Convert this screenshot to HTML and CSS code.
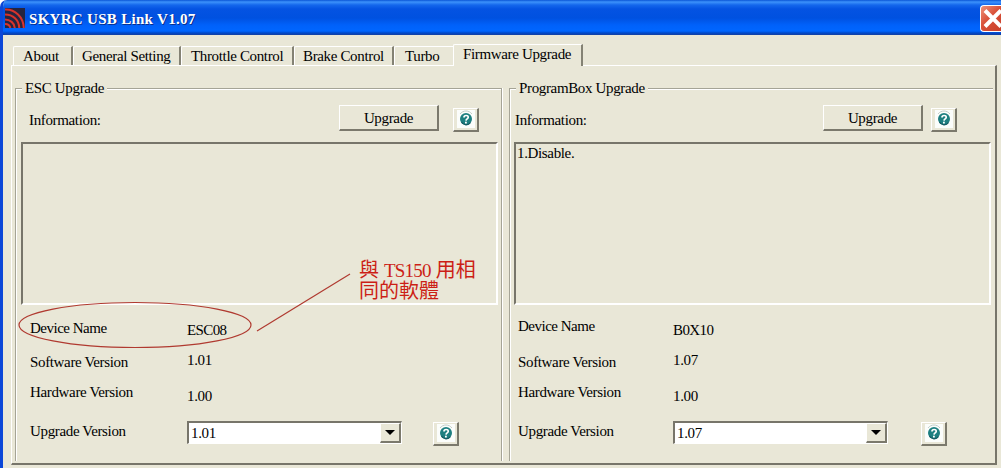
FILE: index.html
```
<!DOCTYPE html>
<html>
	<head>
		<title>SKYRC USB Link V1.07</title>
		<meta charset="UTF-8">
		<link rel="stylesheet" href="styles.css">
	</head>
	<body>

		<!-- shared icons -->
		<svg class="defs" width="0" height="0">
			<symbol id="help" viewBox="0 0 18 18">
				<rect width="18" height="18" fill="#fbfdfb"/>
				<path d="M3 4 C6 0 12 0 15 4" fill="none" stroke="#c3cec8" stroke-width="1"/>
				<circle cx="9" cy="9" r="6" fill="#1d7f80"/>
				<path d="M4.500 12 A5.300 5.300 0 0 0 13.500 12.500" fill="none" stroke="#155b63" stroke-width="1.300"/>
				<path d="M7 7.500 C7 4.800 11.400 4.800 11.200 7.500 C11.100 8.900 9.200 8.900 9 10.600" fill="none" stroke="#fff" stroke-width="1.700"/>
				<rect x="8" y="11.700" width="1.800" height="1.800" fill="#fff"/>
			</symbol>
		</svg>

		<div class="window">
			<div class="titlebar">
				<svg class="logo" width="20" height="20" viewBox="0 0 20 20">
					<rect width="20" height="20" fill="#26253f"/>
					<g fill="none" stroke="#d8332c" stroke-width="2">
						<path d="M0 1.500 C10 1 18.500 9 18.800 20"/>
						<path d="M0 6.500 C8 6.500 14 12 14.300 20"/>
						<path d="M0 11.500 C5 11.500 9.500 15 9.800 20"/>
						<path d="M0 16 C3 16 5 18 5.300 20"/>
					</g>
				</svg>
				<span class="title">SKYRC USB Link V1.07</span>
				<div class="close">
					<svg width="21" height="25" viewBox="0 0 21 25"><path d="M4 4.500 L20 20.500 M20 4.500 L4 20.500" stroke="#fff" stroke-width="4"/></svg>
				</div>
			</div>

			<div class="tabs">
				<div class="tab t_about">About</div>
				<div class="tab t_general">General Setting</div>
				<div class="tab t_throttle">Throttle Control</div>
				<div class="tab t_brake">Brake Control</div>
				<div class="tab t_turbo">Turbo</div>
				<div class="tab t_firmware active">Firmware Upgrade</div>
			</div>

			<div class="page">
				<div class="group esc">
					<div class="legend">ESC Upgrade</div>
					<div class="toolbar">
						<label>Information:</label>
						<div class="button">Upgrade</div>
						<div class="helpbtn"><svg width="20" height="18"><use href="#help"/></svg></div>
					</div>
					<div class="info"></div>
					<div class="details">
						<div class="names">
							<div class="device">Device Name</div>
							<div class="software">Software Version</div>
							<div class="hardware">Hardware Version</div>
							<div class="upgrade">Upgrade Version</div>
						</div>
						<div class="values">
							<div class="device">ESC08</div>
							<div class="software">1.01</div>
							<div class="hardware">1.00</div>
							<div class="select"><span>1.01</span><div class="arrow"></div></div>
						</div>
						<div class="helpbtn"><svg width="20" height="18"><use href="#help"/></svg></div>
					</div>
				</div>

				<div class="group box">
					<div class="legend">ProgramBox Upgrade</div>
					<div class="toolbar">
						<label>Information:</label>
						<div class="button">Upgrade</div>
						<div class="helpbtn"><svg width="20" height="18"><use href="#help"/></svg></div>
					</div>
					<div class="info">1.Disable.</div>
					<div class="details">
						<div class="names">
							<div class="device">Device Name</div>
							<div class="software">Software Version</div>
							<div class="hardware">Hardware Version</div>
							<div class="upgrade">Upgrade Version</div>
						</div>
						<div class="values">
							<div class="device">B0X10</div>
							<div class="software">1.07</div>
							<div class="hardware">1.00</div>
							<div class="select"><span>1.07</span><div class="arrow"></div></div>
						</div>
						<div class="helpbtn"><svg width="20" height="18"><use href="#help"/></svg></div>
					</div>
				</div>
			</div>

			<!-- red pen marks over the window -->
			<svg class="marks" width="500" height="360">
				<ellipse cx="135" cy="325" rx="116" ry="22.500"/>
				<path d="M257 331 L350 274"/>
			</svg>
			<div class="note">與 <span>TS150</span> 用相<br>同的軟體</div>
		</div>

	</body>
</html>
```
FILE: styles.css
```
body {
	margin: 0px;
	background-color: #fff;
	overflow: hidden;
	font-family: "Liberation Serif", "Noto Sans CJK TC", serif;
	font-size: 15px;
	line-height: 18px;
	letter-spacing: -0.35px;
	color: #000;
	white-space: nowrap;
}
.defs {
	position: absolute;
}
.window {
	position: relative;
	box-sizing: border-box;
	width: 1001px;
	height: 468px;
	overflow: hidden;
	background-color: #e9e7d7;
	border-left: 3px solid #0b47d8;
	border-top-left-radius: 7px;
}

/* title bar */
.titlebar {
	display: flex;
	align-items: flex-start;
	box-sizing: border-box;
	height: 35px;
	margin-left: -3px;
	padding: 5px 0px 0px 5px;
	background: linear-gradient(#0a55d6 0px, #3c92fb 2px, #1467ec 5px, #0453e2 9px, #0051e0 18px, #0061fa 25px, #0066ff 31px, #0148c8 33px, #1540a0 35px);
}
.logo {
	margin-top: 3px;
}
.title {
	margin: 5px 0px 0px 4px;
	color: #fff;
	font-weight: bold;
	font-size: 15px;
	letter-spacing: 0.3px;
	text-shadow: 1px 1px #0a2f8c;
}
.close {
	box-sizing: border-box;
	width: 21px;
	height: 27px;
	margin-left: auto;
	border: 1px solid #fff;
	border-right: none;
	border-radius: 4px 0px 0px 4px;
	background: linear-gradient(135deg, #ee9279, #d9513a 45%, #c9402a);
	overflow: hidden;
}

/* tabs */
.tabs {
	display: flex;
	align-items: flex-end;
	height: 30px;
	padding-left: 10px;
}
.tab {
	box-sizing: border-box;
	height: 19px;
	padding-left: 9px;
	border-top: 1px solid #fff;
	border-left: 1px solid #fff;
	border-right: 2px solid #848274;
	border-top-left-radius: 2px;
}
.t_about { width: 60px; }
.t_general { width: 108px; padding-left: 8px; }
.t_throttle { width: 113px; }
.t_brake { width: 100px; padding-left: 8px; }
.t_turbo { width: 59px; padding-left: 10px; border-right: none; }
.t_firmware { width: 130px; }
.tab.active {
	height: 22px;
	margin-bottom: -1px;
	background-color: #e9e7d7;
	position: relative;
}

/* tab page */
.page {
	display: flex;
	align-items: flex-start;
	box-sizing: border-box;
	width: 986px;
	height: 400px;
	margin-left: 8px;
	padding: 22px 0px 0px 3px;
	border: 1px solid #fff;
	border-right: 2px solid #77756a;
	border-bottom: 2px solid #77756a;
}
.group {
	box-sizing: border-box;
	height: 373px;
	border-top: 1px solid #a5a496;
	border-left: 1px solid #a5a496;
	box-shadow: inset 1px 1px #fff;
}
.esc {
	width: 487px;
	padding-left: 5px;
	border-right: 1px solid #a5a496;
	box-shadow: inset 1px 1px #fff, 1px 0px #fff;
}
.box {
	width: 484px;
	margin-left: 7px;
	padding-left: 4px;
}
.legend {
	width: max-content;
	margin: -10px 0px 0px 1px;
	padding: 0px 3px;
	background-color: #e9e7d7;
}
.box .legend {
	margin-left: 2px;
}
.toolbar {
	display: flex;
	height: 27px;
	margin-top: 8px;
}
.toolbar label {
	width: 310px;
	padding: 6px 0px 0px 8px;
	box-sizing: border-box;
}
.box .toolbar label {
	padding-left: 1px;
}
.button {
	box-sizing: border-box;
	width: 100px;
	height: 26px;
	margin-left: 8px;
	padding-top: 3px;
	text-align: center;
}
.box .button {
	margin-left: -1px;
}
.button, .helpbtn, .arrow {
	border: 1px solid #fff;
	border-right: 2px solid #7b796c;
	border-bottom: 2px solid #7b796c;
}
.helpbtn {
	box-sizing: border-box;
	width: 26px;
	height: 24px;
	margin: 3px 0px 0px 14px;
}
.box .toolbar .helpbtn {
	margin-left: 8px;
}
.helpbtn svg {
	display: block;
	margin: 1px auto;
}
.info {
	box-sizing: border-box;
	width: 477px;
	height: 163px;
	margin-top: 10px;
	padding-left: 1px;
	border: 2px solid #77756a;
	border-right-color: #fff;
	border-bottom-color: #fff;
}

/* version rows */
.details {
	display: flex;
	align-items: flex-start;
	padding-left: 9px;
}
.box .details {
	padding-left: 4px;
}
.names {
	width: 157px;
	padding-top: 14px;
}
.box .names {
	width: 155px;
	padding-top: 12px;
}
.names .device {
	letter-spacing: -0.5px;
}
.names .software { margin-top: 16px; }
.box .names .software { margin-top: 18px; }
.names .hardware { margin-top: 12px; }
.names .upgrade { margin-top: 21px; }
.values {
	width: 215px;
	padding-top: 16px;
}
.values .device {
	letter-spacing: -0.6px;
}
.values .software { margin-top: 12px; }
.values .hardware { margin-top: 18px; }
.select {
	display: flex;
	justify-content: space-between;
	box-sizing: border-box;
	height: 23px;
	margin-top: 16px;
	padding-left: 2px;
	background-color: #fff;
	border: 2px solid #77756a;
	border-right: 1px solid #fff;
	border-bottom: 1px solid #fff;
}
.select span {
	padding-top: 1px;
}
.arrow {
	display: flex;
	align-items: center;
	justify-content: center;
	width: 18px;
	background-color: #e9e7d7;
}
.arrow:before {
	content: "";
	border: 5px solid transparent;
	border-top-color: #000;
	border-bottom: none;
}
.details .helpbtn {
	margin: 117px 0px 0px 31px;
}
.box .details .helpbtn {
	margin-left: 33px;
}

/* annotation */
.marks {
	position: absolute;
	left: -3px;
	top: 0px;
	fill: none;
	stroke: #b03a30;
	stroke-width: 1.200;
}
.note {
	position: absolute;
	left: 356px;
	top: 260px;
	font-size: 20px;
	line-height: 20px;
	letter-spacing: 0px;
	color: #cc1f16;
}
.note span {
	font-size: 19px;
	letter-spacing: -0.8px;
}
```
